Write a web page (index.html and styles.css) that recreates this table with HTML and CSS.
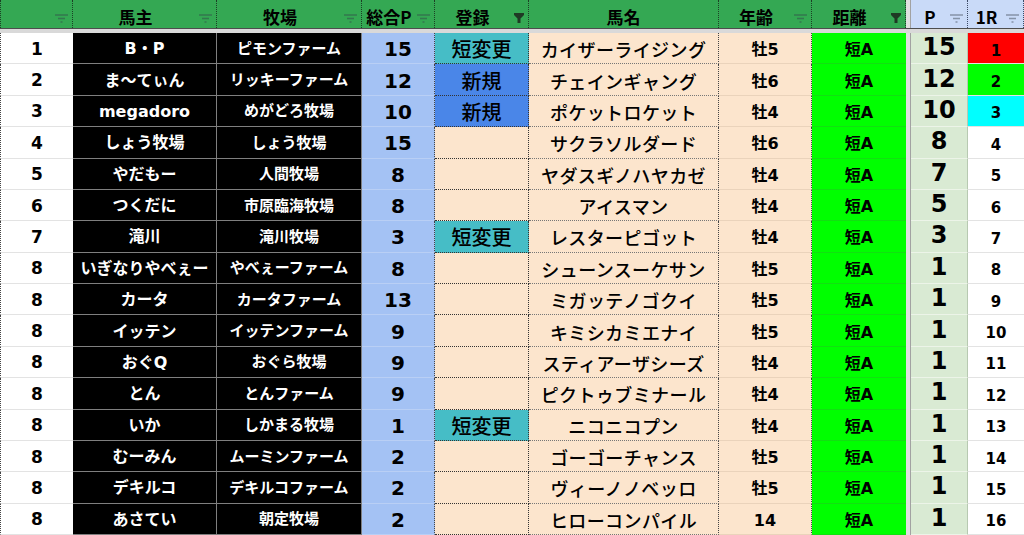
FILE: index.html
```html
<!DOCTYPE html>
<html lang="ja">
<head>
    <meta charset="UTF-8">
    <meta name="viewport" content="width=device-width, initial-scale=1.0">
    <title>短距離 登録一覧</title>
    <link rel="stylesheet" href="styles.css">
</head>
<body>
    <div class="sheet">
        <!-- ヘッダー行 -->
        <div class="row head">
            <div class="hcell"><svg class="flt" width="13" height="9" viewBox="0 0 13 9"><path d="M0 1h13M3 4.5h7M5.5 8h2"/></svg></div>
            <div class="hcell">馬主<svg class="flt" width="13" height="9" viewBox="0 0 13 9"><path d="M0 1h13M3 4.5h7M5.5 8h2"/></svg></div>
            <div class="hcell">牧場<svg class="flt" width="13" height="9" viewBox="0 0 13 9"><path d="M0 1h13M3 4.5h7M5.5 8h2"/></svg></div>
            <div class="hcell">総合P<svg class="flt" width="13" height="9" viewBox="0 0 13 9"><path d="M0 1h13M3 4.5h7M5.5 8h2"/></svg></div>
            <div class="hcell">登録<svg class="flt on" width="10" height="10" viewBox="0 0 10 10"><path d="M0 0h10v2L6.5 5.5V10h-3V5.5L0 2z"/></svg></div>
            <div class="hcell no-icon">馬名</div>
            <div class="hcell">年齢<svg class="flt" width="13" height="9" viewBox="0 0 13 9"><path d="M0 1h13M3 4.5h7M5.5 8h2"/></svg></div>
            <div class="hcell">距離<svg class="flt on" width="10" height="10" viewBox="0 0 10 10"><path d="M0 0h10v2L6.5 5.5V10h-3V5.5L0 2z"/></svg></div>
            <div class="c-sep"></div>
            <div class="hcell blue">P<svg class="flt" width="13" height="9" viewBox="0 0 13 9"><path d="M0 1h13M3 4.5h7M5.5 8h2"/></svg></div>
            <div class="hcell blue">1R<svg class="flt" width="13" height="9" viewBox="0 0 13 9"><path d="M0 1h13M3 4.5h7M5.5 8h2"/></svg></div>
        </div>
        <div class="band"></div>

        <div class="rows">
            <div class="row">
                <div class="cell c-rank">1</div><div class="cell c-owner">B・P</div><div class="cell c-farm">ピモンファーム</div>
                <div class="cell c-total">15</div><div class="cell c-reg reg-short">短変更</div><div class="cell c-horse">カイザーライジング</div>
                <div class="cell c-age">牡5</div><div class="cell c-dist">短A</div><div class="c-sep"></div>
                <div class="cell c-pt">15</div><div class="cell c-r1 r1-red">1</div>
            </div>
            <div class="row">
                <div class="cell c-rank">2</div><div class="cell c-owner">ま～てぃん</div><div class="cell c-farm">リッキーファーム</div>
                <div class="cell c-total">12</div><div class="cell c-reg reg-new">新規</div><div class="cell c-horse">チェインギャング</div>
                <div class="cell c-age">牡6</div><div class="cell c-dist">短A</div><div class="c-sep"></div>
                <div class="cell c-pt">12</div><div class="cell c-r1 r1-green">2</div>
            </div>
            <div class="row">
                <div class="cell c-rank">3</div><div class="cell c-owner">megadoro</div><div class="cell c-farm">めがどろ牧場</div>
                <div class="cell c-total">10</div><div class="cell c-reg reg-new">新規</div><div class="cell c-horse">ポケットロケット</div>
                <div class="cell c-age">牡4</div><div class="cell c-dist">短A</div><div class="c-sep"></div>
                <div class="cell c-pt">10</div><div class="cell c-r1 r1-cyan">3</div>
            </div>
            <div class="row">
                <div class="cell c-rank">4</div><div class="cell c-owner">しょう牧場</div><div class="cell c-farm">しょう牧場</div>
                <div class="cell c-total">15</div><div class="cell c-reg"></div><div class="cell c-horse">サクラソルダード</div>
                <div class="cell c-age">牡6</div><div class="cell c-dist">短A</div><div class="c-sep"></div>
                <div class="cell c-pt">8</div><div class="cell c-r1">4</div>
            </div>
            <div class="row">
                <div class="cell c-rank">5</div><div class="cell c-owner">やだもー</div><div class="cell c-farm">人間牧場</div>
                <div class="cell c-total">8</div><div class="cell c-reg"></div><div class="cell c-horse">ヤダスギノハヤカゼ</div>
                <div class="cell c-age">牡4</div><div class="cell c-dist">短A</div><div class="c-sep"></div>
                <div class="cell c-pt">7</div><div class="cell c-r1">5</div>
            </div>
            <div class="row">
                <div class="cell c-rank">6</div><div class="cell c-owner">つくだに</div><div class="cell c-farm">市原臨海牧場</div>
                <div class="cell c-total">8</div><div class="cell c-reg"></div><div class="cell c-horse">アイスマン</div>
                <div class="cell c-age">牡4</div><div class="cell c-dist">短A</div><div class="c-sep"></div>
                <div class="cell c-pt">5</div><div class="cell c-r1">6</div>
            </div>
            <div class="row">
                <div class="cell c-rank">7</div><div class="cell c-owner">滝川</div><div class="cell c-farm">滝川牧場</div>
                <div class="cell c-total">3</div><div class="cell c-reg reg-short">短変更</div><div class="cell c-horse">レスターピゴット</div>
                <div class="cell c-age">牡4</div><div class="cell c-dist">短A</div><div class="c-sep"></div>
                <div class="cell c-pt">3</div><div class="cell c-r1">7</div>
            </div>
            <div class="row">
                <div class="cell c-rank">8</div><div class="cell c-owner">いぎなりやべぇー</div><div class="cell c-farm">やべぇーファーム</div>
                <div class="cell c-total">8</div><div class="cell c-reg"></div><div class="cell c-horse">シューンスーケサン</div>
                <div class="cell c-age">牡5</div><div class="cell c-dist">短A</div><div class="c-sep"></div>
                <div class="cell c-pt">1</div><div class="cell c-r1">8</div>
            </div>
            <div class="row">
                <div class="cell c-rank">8</div><div class="cell c-owner">カータ</div><div class="cell c-farm">カータファーム</div>
                <div class="cell c-total">13</div><div class="cell c-reg"></div><div class="cell c-horse">ミガッテノゴクイ</div>
                <div class="cell c-age">牡5</div><div class="cell c-dist">短A</div><div class="c-sep"></div>
                <div class="cell c-pt">1</div><div class="cell c-r1">9</div>
            </div>
            <div class="row">
                <div class="cell c-rank">8</div><div class="cell c-owner">イッテン</div><div class="cell c-farm">イッテンファーム</div>
                <div class="cell c-total">9</div><div class="cell c-reg"></div><div class="cell c-horse">キミシカミエナイ</div>
                <div class="cell c-age">牡5</div><div class="cell c-dist">短A</div><div class="c-sep"></div>
                <div class="cell c-pt">1</div><div class="cell c-r1">10</div>
            </div>
            <div class="row">
                <div class="cell c-rank">8</div><div class="cell c-owner">おぐQ</div><div class="cell c-farm">おぐら牧場</div>
                <div class="cell c-total">9</div><div class="cell c-reg"></div><div class="cell c-horse">スティアーザシーズ</div>
                <div class="cell c-age">牡4</div><div class="cell c-dist">短A</div><div class="c-sep"></div>
                <div class="cell c-pt">1</div><div class="cell c-r1">11</div>
            </div>
            <div class="row">
                <div class="cell c-rank">8</div><div class="cell c-owner">とん</div><div class="cell c-farm">とんファーム</div>
                <div class="cell c-total">9</div><div class="cell c-reg"></div><div class="cell c-horse">ピクトゥブミナール</div>
                <div class="cell c-age">牡4</div><div class="cell c-dist">短A</div><div class="c-sep"></div>
                <div class="cell c-pt">1</div><div class="cell c-r1">12</div>
            </div>
            <div class="row">
                <div class="cell c-rank">8</div><div class="cell c-owner">いか</div><div class="cell c-farm">しかまる牧場</div>
                <div class="cell c-total">1</div><div class="cell c-reg reg-short">短変更</div><div class="cell c-horse">ニコニコプン</div>
                <div class="cell c-age">牡4</div><div class="cell c-dist">短A</div><div class="c-sep"></div>
                <div class="cell c-pt">1</div><div class="cell c-r1">13</div>
            </div>
            <div class="row">
                <div class="cell c-rank">8</div><div class="cell c-owner">むーみん</div><div class="cell c-farm">ムーミンファーム</div>
                <div class="cell c-total">2</div><div class="cell c-reg"></div><div class="cell c-horse">ゴーゴーチャンス</div>
                <div class="cell c-age">牡5</div><div class="cell c-dist">短A</div><div class="c-sep"></div>
                <div class="cell c-pt">1</div><div class="cell c-r1">14</div>
            </div>
            <div class="row">
                <div class="cell c-rank">8</div><div class="cell c-owner">デキルコ</div><div class="cell c-farm">デキルコファーム</div>
                <div class="cell c-total">2</div><div class="cell c-reg"></div><div class="cell c-horse">ヴィーノノベッロ</div>
                <div class="cell c-age">牡5</div><div class="cell c-dist">短A</div><div class="c-sep"></div>
                <div class="cell c-pt">1</div><div class="cell c-r1">15</div>
            </div>
            <div class="row">
                <div class="cell c-rank">8</div><div class="cell c-owner">あさてい</div><div class="cell c-farm">朝定牧場</div>
                <div class="cell c-total">2</div><div class="cell c-reg"></div><div class="cell c-horse">ヒローコンパイル</div>
                <div class="cell c-age">14</div><div class="cell c-dist">短A</div><div class="c-sep"></div>
                <div class="cell c-pt">1</div><div class="cell c-r1">16</div>
            </div>
        </div>
    </div>
</body>
</html>
```

FILE: styles.css
```css
/* スプレッドシート風の一覧 */
* {
    box-sizing: border-box;
}

body {
    margin: 0;
    font-family: "DejaVu Sans", "Noto Sans CJK JP", sans-serif;
    background: #fff;
    color: #000;
    overflow: hidden;
}

.sheet {
    height: 100vh;
    display: flex;
    flex-direction: column;
}

.row {
    display: grid;
    grid-template-columns: 73px 144px 145px 73px 94px 190px 93px 94px 5px 57px 1fr;
}

/* ヘッダー */
.head {
    height: 29px;
    border-bottom: 1px solid #4d4d4d;
}

.hcell {
    position: relative;
    display: flex;
    align-items: center;
    justify-content: center;
    padding: 4px 18px 0 0;
    background: #34a853;
    border-right: 1px dotted #1c3f25;
    font-family: "Noto Sans CJK JP", sans-serif;
    font-size: 17px;
    font-weight: bold;
    line-height: 1;
}

.hcell:first-child {
    border-left: 1px dotted #1c3f25;
}

.hcell.no-icon {
    padding-right: 0;
}

.hcell.blue {
    background: #c9daf8;
    border-right-color: #3c4a66;
}

.flt {
    position: absolute;
    right: 4px;
    bottom: 5px;
    fill: none;
    stroke: rgba(50, 60, 70, 0.45);
    stroke-width: 1.3;
}

.flt.on {
    stroke: none;
    fill: #1f3a24;
}

.band {
    height: 4px;
    background: #d9d9d9;
}

.c-sep {
    background: #e0e0e0;
    border-right: 1px solid #a2a2a2;
}

/* 本体 */
.rows {
    flex: 1;
    display: grid;
    grid-template-rows: repeat(16, 1fr);
}

.cell {
    display: flex;
    align-items: center;
    justify-content: center;
    padding-top: 2px;
    font-weight: bold;
    line-height: 1;
    white-space: nowrap;
}

.c-rank {
    background: #fff;
    border-left: 1px dotted #444;
    border-bottom: 1px solid #e3e3e3;
    font-size: 17px;
}

.c-owner,
.c-farm {
    background: #000;
    color: #fff;
    border-right: 1px solid #7f7f7f;
    border-bottom: 1px solid #7f7f7f;
}

.c-owner {
    font-size: 16px;
}

.c-farm {
    font-size: 15px;
}

.c-total {
    background: #a4c2f4;
    border-right: 1px dotted #444;
    border-bottom: 1px solid #b9cff5;
    font-size: 20px;
}

.c-reg {
    background: #fce5cd;
    border-right: 1px dotted #333;
    border-bottom: 1px dotted #333;
    font-family: "Noto Sans CJK JP", sans-serif;
    font-size: 20px;
    font-weight: 500;
}

.reg-short {
    background: #46bdc6;
}

.reg-new {
    background: #4a86e8;
}

.c-horse {
    background: #fce5cd;
    border-right: 1px dotted #444;
    border-bottom: 1px dotted #777;
    font-family: "Noto Sans CJK JP", sans-serif;
    font-size: 18px;
    font-weight: 500;
    letter-spacing: 0.4px;
}

.c-age {
    background: #fce5cd;
    border-right: 1px dotted #444;
    border-bottom: 1px solid #ead3bb;
    font-size: 16px;
    padding-top: 4px;
}

.c-dist {
    background: #00ff00;
    border-bottom: 1px solid #12e012;
    font-size: 16px;
    padding-top: 4px;
}

.c-pt {
    background: #d9ead3;
    border-right: 1px solid #b7c9b1;
    border-bottom: 1px solid #ecf4e8;
    font-size: 24px;
    padding: 0 0 2px;
}

.c-r1 {
    background: #fff;
    border-bottom: 1px solid #e3e3e3;
    font-size: 15px;
    padding-top: 6px;
}

.r1-red {
    background: #ff0000;
}

.r1-green {
    background: #00ff00;
}

.r1-cyan {
    background: #00ffff;
}
```
